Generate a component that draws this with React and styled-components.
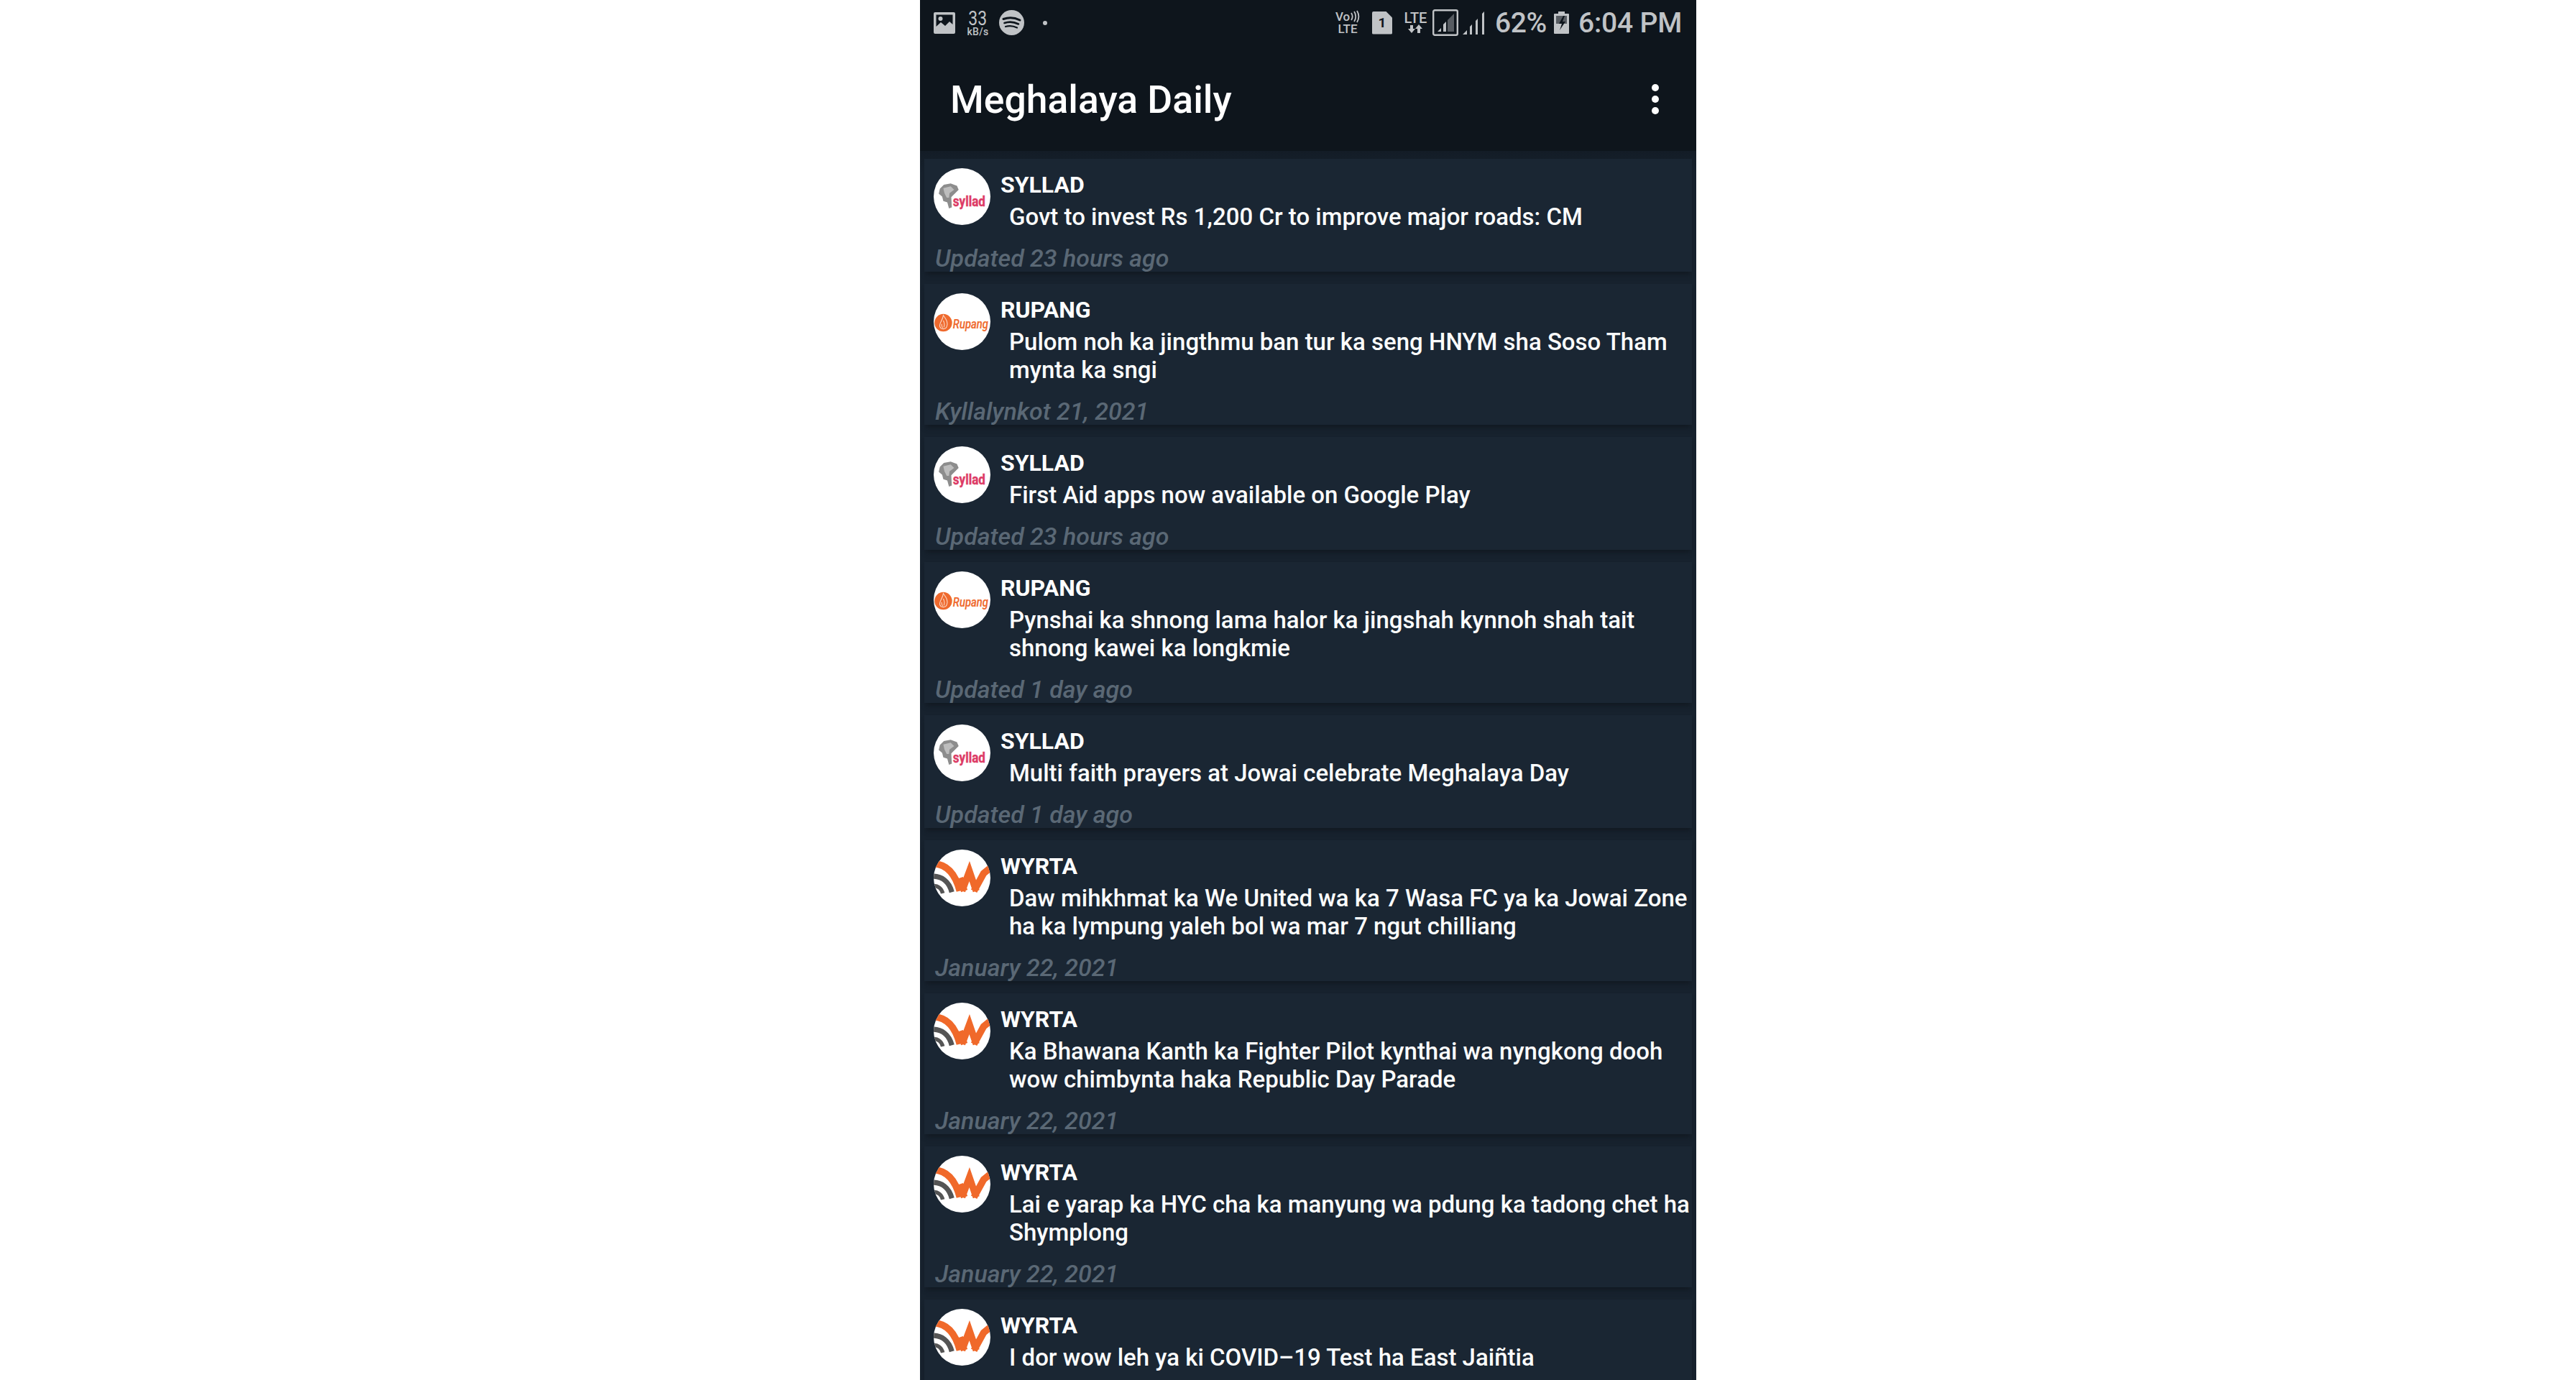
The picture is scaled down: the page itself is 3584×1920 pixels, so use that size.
import React from 'react';
import styled, { createGlobalStyle } from 'styled-components';

const Global = createGlobalStyle`
  html, body { margin: 0; padding: 0; background: #fff; height: 1920px; overflow: hidden; }
  #root { height: 1920px; }
`;
const Page = styled.div`
  width: 1080px; height: 1920px; margin: 0 0 0 1280px; overflow: hidden;
  background: #131d27; font-family: Roboto, "Liberation Sans", sans-serif; color: #fff;
`;
const Header = styled.header`
  background: #0e151c; height: 210px; display: flex; flex-direction: column;
`;
const StatusBar = styled.div`
  height: 63px; display: flex; align-items: center; justify-content: space-between;
  padding: 0 22px 0 19px; color: #c0c3c6;
`;
const StatusGroup = styled.div`display: flex; align-items: center;`;
const Gap = styled.span`display: block; width: ${p => p.$w}px; flex: none;`;
const Speed = styled.div`
  width: 33px; display: flex; flex-direction: column; align-items: center; line-height: 1;
  strong { font-size: 27px; font-weight: 400; transform: scaleX(.85); height: 24px; margin-top: -2px; }
  small { font-size: 14px; font-weight: 500; height: 12px; letter-spacing: .3px; }
`;
const Notification = styled.i`
  display: block; width: 6px; height: 6px; border-radius: 50%; background: #c0c3c6;
`;
const StackedLabel = styled.div`
  width: ${p => p.$w}px; display: flex; flex-direction: column; align-items: center;
  font-size: ${p => p.$size}px; font-weight: 500; line-height: 1; white-space: nowrap;
`;
const VoRow = styled.div`display: flex; align-items: center; height: 18px; gap: 1px;`;
const LteText = styled.div`height: 17px; line-height: 17px;`;
const SimBadge = styled.div`
  width: 28px; height: 32px; border-radius: 2px 0 2px 2px; background: #c0c3c6; color: #0e151c;
  clip-path: polygon(0 0, 68% 0, 100% 28%, 100% 100%, 0 100%);
  display: flex; align-items: center; justify-content: center;
  font-size: 19px; font-weight: 700; line-height: 1;
`;
const Percent = styled.span`font-size: 39px; font-weight: 500; width: 71px; white-space: nowrap; letter-spacing: -.4px;`;
const Clock = styled.span`font-size: 39px; font-weight: 500; white-space: nowrap; width: 142px; letter-spacing: -.2px;`;
const Toolbar = styled.div`
  flex: 1; display: flex; align-items: center; justify-content: space-between;
  padding: 5px 52px 0 42px;
`;
const Title = styled.h1`margin: 0; font-size: 53.5px; font-weight: 500; line-height: 1;`;
const Dots = styled.div`
  display: flex; flex-direction: column; gap: 5.5px; margin-top: -2px;
  i { display: block; width: 10.5px; height: 10.5px; border-radius: 50%; background: #fff; }
`;
const List = styled.main`
  padding: 11px 6px 0; display: flex; flex-direction: column; gap: 17px;
  background: linear-gradient(#131c26, #17222e 30px);
`;
const Card = styled.article`
  background: #1a2633; padding: 13px 0 0 13px; flex: none;
  box-shadow: 0 6px 6px -2px #121a23;
`;
const Row = styled.div`display: flex; gap: 14px;`;
const Avatar = styled.div`
  width: 79px; height: 79px; border-radius: 50%; background: #fff; overflow: hidden; flex: none;
  svg { display: block; width: 100%; height: 100%; }
`;
const Texts = styled.div`flex: 1; min-width: 0; padding-top: 4px;`;
const Source = styled.div`font-size: 32px; font-weight: 700; line-height: 39px; margin-bottom: 5px;`;
const Headline = styled.div`
  font-size: 33px; font-weight: 500; line-height: 39px; padding-left: 12px; color: #fbfcfc;
`;
const When = styled.div`
  font-size: 34px; font-style: italic; font-weight: 500; line-height: 38px; min-height: 38px;
  margin: 19px 0 0 2px; color: #5a6875;
`;

const Syllad = () => (
  <svg viewBox="0 0 100 100">
    <path d="M11 36 L18 29 L30 27 L41 31 L44 38 L37 45 L31 51 L32 69 L27 71 L24 60 L17 58 L15 50 L9 45 Z" fill="#8d8d8d" />
    <path d="M17 35 L30 32 L36 38 L28 44 L27 52 L23 52 L19 44 Z" fill="#bdbdbd" />
    <text x="34" y="67" fontFamily="Roboto, sans-serif" fontWeight="700" fontSize="25" fill="#dd3b66" stroke="#dd3b66" strokeWidth=".5" textLength="57" lengthAdjust="spacingAndGlyphs">syllad</text>
  </svg>
);
const Rupang = () => (
  <svg viewBox="0 0 100 100">
    <circle cx="17" cy="52" r="15.5" fill="#ef6a2e" />
    <path d="M17 39 C22 46 26 51 23 59 C21 64 13 64 11 59 C9 53 16 48 17 39 Z M17 48 C19 52 20 55 18 60 M14 54 C14 57 14 59 16 61" fill="none" stroke="#fbd9c8" strokeWidth="1.4" />
    <text x="34" y="62" fontFamily="Roboto, sans-serif" fontStyle="italic" fontWeight="500" fontSize="23" fill="#ef6a2e" stroke="#ef6a2e" strokeWidth=".3" textLength="62" lengthAdjust="spacingAndGlyphs">Rupang</text>
  </svg>
);
const Wyrta = () => (
  <svg viewBox="0 0 100 100">
    <g fill="none">
      <path d="M-2 25 C22 25 38 42 46 73" stroke="#f0692a" strokeWidth="12" />
      <path d="M50 73 L63 38 L75 73 M71 73 L88 42 L100 32 M46 50 L54 73" stroke="#f0692a" strokeWidth="12" />
      <path d="M-2 47 C14 47 27 56 32 75" stroke="#555" strokeWidth="9" />
      <path d="M0 64 C8 64 14 69 16 77" stroke="#555" strokeWidth="7" />
    </g>
  </svg>
);
const logos = { SYLLAD: Syllad, RUPANG: Rupang, WYRTA: Wyrta };

const items = [
  ['SYLLAD', 'Govt to invest Rs 1,200 Cr to improve major roads: CM', 'Updated 23 hours ago'],
  ['RUPANG', 'Pulom noh ka jingthmu ban tur ka seng HNYM sha Soso Tham mynta ka sngi', 'Kyllalynkot 21, 2021'],
  ['SYLLAD', 'First Aid apps now available on Google Play', 'Updated 23 hours ago'],
  ['RUPANG', 'Pynshai ka shnong lama halor ka jingshah kynnoh shah tait shnong kawei ka longkmie', 'Updated 1 day ago'],
  ['SYLLAD', 'Multi faith prayers at Jowai celebrate Meghalaya Day', 'Updated 1 day ago'],
  ['WYRTA', 'Daw mihkhmat ka We United wa ka 7 Wasa FC ya ka Jowai Zone ha ka lympung yaleh bol wa mar 7 ngut chilliang', 'January 22, 2021'],
  ['WYRTA', 'Ka Bhawana Kanth ka Fighter Pilot kynthai wa nyngkong dooh wow chimbynta haka Republic Day Parade', 'January 22, 2021'],
  ['WYRTA', 'Lai e yarap ka HYC cha ka manyung wa pdung ka tadong chet ha Shymplong', 'January 22, 2021'],
  ['WYRTA', 'I dor wow leh ya ki COVID–19 Test ha East Jaiñtia', ''],
];

const c = '#c0c3c6';
const PictureIcon = () => (
  <svg width="30" height="30" viewBox="0 0 30 30">
    <path fillRule="evenodd" fill={c} d="M2 0H28a2 2 0 0 1 2 2V28a2 2 0 0 1-2 2H2a2 2 0 0 1-2-2V2a2 2 0 0 1 2-2ZM3.5 3.5V20L10 14l6 5 6-6 4.5 4V3.5Z" />
    <circle cx="9.5" cy="9" r="3" fill={c} />
  </svg>
);
const SpotifyIcon = () => (
  <svg width="35" height="35" viewBox="0 0 35 35">
    <circle cx="17.5" cy="17.5" r="17.5" fill={c} />
    <g fill="none" stroke="#0e151c" strokeLinecap="round">
      <path d="M6 12.5C13 10 22 10.5 29 14" strokeWidth="3" />
      <path d="M7.5 18C13 16 21 16.5 27 19.5" strokeWidth="2.6" />
      <path d="M9 23C14 21.5 20 22 25 24.5" strokeWidth="2.2" />
    </g>
  </svg>
);
const VoWaves = () => (
  <svg width="13" height="18" viewBox="0 0 13 18">
    <path d="M1 4c2 3 2 7 0 10M5 2c3 4 3 10 0 14M9 1c3 5 3 11 0 16" fill="none" stroke={c} strokeWidth="1.8" />
  </svg>
);
const LteArrows = () => (
  <svg width="22" height="12" viewBox="0 0 22 12">
    <path d="M3 1h4v5h3L5 12 0 6h3ZM17 12h-4V6h-3l5-6 5 6h-3Z" fill={c} />
  </svg>
);
const BoxSignal = () => (
  <svg width="36" height="37" viewBox="0 0 36 37">
    <rect x="1.2" y="1.2" width="33.6" height="34.6" rx="2" fill="none" stroke={c} strokeWidth="2.4" />
    <path d="M7 31l5-5v5ZM15 31V21l4-4v14Z" fill={c} />
    <path d="M21 31V15l9-9V31Z" fill="#575c62" />
  </svg>
);
const BarSignal = () => (
  <svg width="31" height="32" viewBox="0 0 31 32">
    <path d="M0 32l6-6v6ZM10 32V21l3-3V32ZM18 32V13l3-3V32ZM27 32V3l3-3V32Z" fill={c} />
  </svg>
);
const BatteryIcon = () => (
  <svg width="21" height="31" viewBox="0 0 21 31">
    <path d="M6 0h9v3h5a1 1 0 0 1 1 1V30a1 1 0 0 1-1 1H1a1 1 0 0 1-1-1V4a1 1 0 0 1 1-1h5Z" fill={c} />
    <path d="M3 6h15v11H3Z" fill="#575c62" />
    <path d="M13 6 7 17h4l-3 9 8-12h-4l3-8Z" fill="#0e151c" />
  </svg>
);

export default function App() {
  return (
    <Page>
      <Global />
      <Header>
        <StatusBar>
          <StatusGroup>
            <PictureIcon /><Gap $w={15} />
            <Speed><strong>33</strong><small>kB/s</small></Speed><Gap $w={13} />
            <SpotifyIcon /><Gap $w={26} />
            <Notification />
          </StatusGroup>
          <StatusGroup>
            <StackedLabel $w={32} $size={17}>
              <VoRow>Vo<VoWaves /></VoRow>
              <LteText>LTE</LteText>
            </StackedLabel><Gap $w={18} />
            <SimBadge>1</SimBadge><Gap $w={16} />
            <StackedLabel $w={33} $size={20}>
              <LteText>LTE</LteText>
              <LteArrows />
            </StackedLabel><Gap $w={7} />
            <BoxSignal /><Gap $w={6} />
            <BarSignal /><Gap $w={14} />
            <Percent>62%</Percent><Gap $w={11} />
            <BatteryIcon /><Gap $w={13} />
            <Clock>6:04 PM</Clock>
          </StatusGroup>
        </StatusBar>
        <Toolbar>
          <Title>Meghalaya Daily</Title>
          <Dots><i /><i /><i /></Dots>
        </Toolbar>
      </Header>
      <List>
        {items.map(([src, text, when], i) => {
          const Logo = logos[src];
          return (
            <Card key={i}>
              <Row>
                <Avatar><Logo /></Avatar>
                <Texts>
                  <Source>{src}</Source>
                  <Headline>{text}</Headline>
                </Texts>
              </Row>
              <When>{when}</When>
            </Card>
          );
        })}
      </List>
    </Page>
  );
}
